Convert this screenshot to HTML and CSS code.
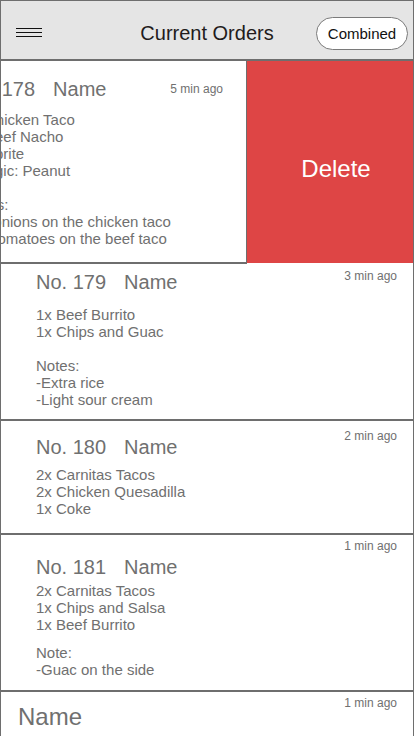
FILE: index.html
```html
<!DOCTYPE html>
<html lang="en">
<head>
<meta charset="utf-8">
<title>Current Orders</title>
<link rel="stylesheet" href="styles.css">
</head>
<body>
<div class="screen">
  <header class="topbar">
    <button class="menu" aria-label="Menu">
      <svg width="26" height="10" viewBox="0 0 26 10"><path d="M0 0.5H26M0 4.5H26M0 8.5H26" stroke="#111" stroke-width="1"/></svg>
    </button>
    <h1 class="topbar__title">Current Orders</h1>
    <div class="topbar__right"><button class="pill">Combined</button></div>
  </header>

  <div class="row row--swiped">
    <article class="card card--swiped">
      <span class="card__time card__time--a">5 min ago</span>
      <div class="card__inner">
        <h2 class="card__title">No. 178<span class="card__name">Name</span></h2>
        <ul class="card__items">
          <li>1x Chicken Taco</li>
          <li>1x Beef Nacho</li>
          <li>1x Sprite</li>
          <li>Allergic: Peanut</li>
        </ul>
        <ul class="card__notes">
          <li>Notes:</li>
          <li>-No onions on the chicken taco</li>
          <li>-No tomatoes on the beef taco</li>
        </ul>
      </div>
    </article>
    <button class="delete">Delete</button>
  </div>

  <article class="card card--179">
    <span class="card__time card__time--b">3 min ago</span>
    <h2 class="card__title">No. 179<span class="card__name">Name</span></h2>
    <ul class="card__items">
      <li>1x Beef Burrito</li>
      <li>1x Chips and Guac</li>
    </ul>
    <ul class="card__notes">
      <li>Notes:</li>
      <li>-Extra rice</li>
      <li>-Light sour cream</li>
    </ul>
  </article>

  <article class="card card--180">
    <span class="card__time card__time--c">2 min ago</span>
    <h2 class="card__title">No. 180<span class="card__name">Name</span></h2>
    <ul class="card__items">
      <li>2x Carnitas Tacos</li>
      <li>2x Chicken Quesadilla</li>
      <li>1x Coke</li>
    </ul>
  </article>

  <article class="card card--181">
    <span class="card__time card__time--d">1 min ago</span>
    <h2 class="card__title">No. 181<span class="card__name">Name</span></h2>
    <ul class="card__items">
      <li>2x Carnitas Tacos</li>
      <li>1x Chips and Salsa</li>
      <li>1x Beef Burrito</li>
    </ul>
    <ul class="card__notes card__notes--tight">
      <li>Note:</li>
      <li>-Guac on the side</li>
    </ul>
  </article>

  <article class="card card--last">
    <span class="card__time card__time--d">1 min ago</span>
    <h2 class="card__big">Name</h2>
  </article>
</div>
</body>
</html>
```

FILE: styles.css
```css
* { box-sizing: border-box; }
html, body { margin: 0; padding: 0; background: #fff; }
body { font-family: "Liberation Sans", Arial, sans-serif; }

.screen {
  width: 414px;
  height: 736px;
  border: 1px solid #6e6e6e;
  border-bottom: none;
  overflow: hidden;
  display: flex;
  flex-direction: column;
}

.topbar {
  height: 60px;
  flex: none;
  background: #e5e5e5;
  border-bottom: 2px solid #6e6e6e;
  padding: 6px 5px 0 5px;
  display: grid;
  grid-template-columns: 1fr auto 1fr;
  align-items: center;
}
.menu {
  border: 0;
  background: none;
  padding: 0;
  margin-left: 10px;
  width: 26px;
  height: 10px;
  display: block;
}
.menu svg { display: block; }
.topbar__title {
  margin: 0;
  font-size: 20px;
  line-height: 24px;
  font-weight: normal;
  color: #221b1b;
}
.topbar__right { display: flex; justify-content: flex-end; }
.pill {
  width: 92px;
  height: 33px;
  border: 1px solid #7a7a7a;
  border-radius: 17px;
  background: #fff;
  font-family: inherit;
  font-size: 15px;
  color: #111;
  padding: 0;
}

.row--swiped {
  display: flex;
  flex: none;
  margin-right: -1px;
}
.delete {
  flex: 1;
  border: 0;
  background: #de4545;
  color: #fff;
  font-family: inherit;
  font-size: 24px;
  line-height: 28px;
  padding: 13px 0 0 11px;
  margin-bottom: 1px;
}

.card {
  position: relative;
  flex: none;
  border-bottom: 2px solid #6e6e6e;
  padding-left: 35px;
  color: #707070;
}
.card--swiped {
  width: 246px;
  border-right: 1px solid #6e6e6e;
  overflow: hidden;
  padding: 16px 0 15px 0;
}
.card--swiped .card__inner { margin-left: -36px; white-space: nowrap; }
.card--swiped .card__title { margin-bottom: 10px; }
.card--179 { padding-top: 6px; padding-bottom: 11px; }
.card--179 .card__title { margin-bottom: 12px; }
.card--180 { padding-top: 14px; padding-bottom: 16px; }
.card--180 .card__title { margin-bottom: 7px; }
.card--181 { padding-top: 20px; padding-bottom: 12px; }
.card--181 .card__title { margin-bottom: 3px; }
.card--last { flex: 1; border-bottom: 0; padding-left: 17px; padding-top: 11px; }

.card__title {
  margin: 0;
  font-size: 20px;
  line-height: 24px;
  font-weight: normal;
}
.card__name { margin-left: 18px; }
.card__big {
  margin: 0;
  font-size: 24px;
  line-height: 28px;
  font-weight: normal;
}

.card__items, .card__notes {
  list-style: none;
  margin: 0;
  padding: 0;
  font-size: 15px;
  line-height: 17px;
}
.card__notes { margin-top: 17px; }
.card__notes--tight { margin-top: 11px; }

.card__time {
  position: absolute;
  right: 16px;
  font-size: 12px;
  line-height: 14px;
  color: #707070;
}
.card__time--a { top: 21px; right: 23px; }
.card__time--b { top: 5px; }
.card__time--c { top: 8px; }
.card__time--d { top: 4px; }
```
